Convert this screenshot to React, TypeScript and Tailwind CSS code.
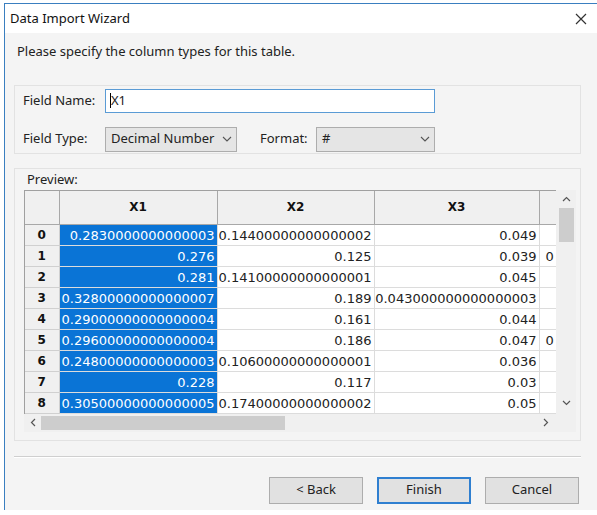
import React from 'react';

const rows = [
  ['0.2830000000000003', '0.14400000000000002', '0.049', ''],
  ['0.276', '0.125', '0.039', '0'],
  ['0.281', '0.14100000000000001', '0.045', ''],
  ['0.32800000000000007', '0.189', '0.043000000000000003', ''],
  ['0.29000000000000004', '0.161', '0.044', ''],
  ['0.29600000000000004', '0.186', '0.047', '0'],
  ['0.24800000000000003', '0.10600000000000001', '0.036', ''],
  ['0.228', '0.117', '0.03', ''],
  ['0.30500000000000005', '0.17400000000000002', '0.05', ''],
];

const ui = { fontFamily: '"Noto Sans", "Open Sans", sans-serif' };
const cell = { fontFamily: '"DejaVu Sans", sans-serif' };

function Chevron() {
  return (
    <svg width="10" height="6" viewBox="0 0 10 6" className="text-[#555]">
      <path d="M1 1l4 4 4-4" fill="none" stroke="currentColor" strokeWidth="1.1" />
    </svg>
  );
}

function Select({ value, width }: { value: string; width: string }) {
  return (
    <div className={`${width} h-[25px] flex items-center justify-between px-[4px] border border-[#adadad] bg-[#e5e5e5] text-[13px] text-[#222]`}>
      <span className="pl-[1px]">{value}</span>
      <Chevron />
    </div>
  );
}

function Btn({ label, primary }: { label: string; primary?: boolean }) {
  return (
    <div
      className={`w-[94px] h-[27px] flex items-center justify-center text-[13px] text-[#222] bg-[#e1e1e1] border ${primary ? 'border-[#2f7fd0] border-2' : 'border-[#adadad]'}`}
    >
      {label}
    </div>
  );
}

export default function App() {
  return (
    <div className="w-[597px] h-[515px] bg-white overflow-hidden" style={ui}>
      <div className="ml-[4px] mt-[3px] h-[507px] border-l border-t border-[#3a7fc0] bg-[#f4f4f4] flex flex-col">
        {/* title bar */}
        <div className="h-[29px] bg-white flex items-center justify-between pl-[5px] pr-[10px]">
          <span className="text-[13px] text-[#111]">Data Import Wizard</span>
          <svg width="12" height="12" viewBox="0 0 12 12">
            <path d="M1 1l10 10M11 1L1 11" stroke="#333" strokeWidth="1.2" />
          </svg>
        </div>

        <div className="pl-[12px] pt-[9px] text-[13px] text-[#222]">Please specify the column types for this table.</div>

        {/* field group */}
        <div className="mt-[23px] ml-[9px] w-[567px] h-[69px] border border-[#e2e2e2] pl-[8px] pt-[3px] flex flex-col gap-[14px] text-[13px] text-[#222]">
          <div className="flex items-center">
            <span className="w-[82px]">Field Name:</span>
            <div className="w-[330px] h-[24px] border border-[#5a9bd5] bg-white flex items-center pl-[4px]">
              <span className="w-[1px] h-[15px] bg-black" />
              <span>X1</span>
            </div>
          </div>
          <div className="flex items-center">
            <span className="w-[82px]">Field Type:</span>
            <Select value="Decimal Number" width="w-[132px]" />
            <span className="ml-[23px] w-[56px]">Format:</span>
            <Select value="#" width="w-[119px]" />
          </div>
        </div>

        {/* preview group */}
        <div className="mt-[14px] ml-[9px] w-[567px] h-[273px] border border-[#e2e2e2] pl-[9px] text-[13px] text-[#222]">
          <div className="pl-[3px] h-[21px] leading-[21px]">Preview:</div>
          <div className="flex">
            <div className="w-[532px] h-[224px] bg-white overflow-hidden border-t border-l border-[#a0a0a0]">
              <table className="w-[574px] border-collapse table-fixed text-[13px]" style={cell}>
                <colgroup>
                  <col className="w-[34px]" />
                  <col className="w-[158px]" />
                  <col className="w-[157px]" />
                  <col className="w-[165px]" />
                  <col className="w-[60px]" />
                </colgroup>
                <thead>
                  <tr className="h-[34px]">
                    <th className="border-r border-b border-[#a8a8a8] bg-[#f0f0f0]" />
                    {['X1', 'X2', 'X3', ''].map((h, i) => (
                      <th key={i} className="border-r border-b border-[#a8a8a8] bg-[#f0f0f0] font-bold text-[12px] text-[#111]">
                        {h}
                      </th>
                    ))}
                  </tr>
                </thead>
                <tbody>
                  {rows.map((r, i) => (
                    <tr key={i} className="h-[21px]">
                      <td className="border-r border-b border-[#d0d0d0] bg-[#f0f0f0] text-center font-bold text-[12px] text-[#111] leading-none">{i}</td>
                      {r.map((v, j) => (
                        <td
                          key={j}
                          className={`border-r border-b border-[#dcdcdc] leading-none whitespace-nowrap overflow-hidden ${
                            j === 0 ? 'bg-[#0a74d6] text-white text-right pr-[2px]' : j === 3 ? 'pl-[6px] text-[#222]' : 'text-right pr-[2px] text-[#222]'
                          }`}
                        >
                          {v}
                        </td>
                      ))}
                    </tr>
                  ))}
                </tbody>
              </table>
            </div>
            {/* vertical scrollbar */}
            <div className="w-[20px] h-[224px] bg-[#f0f0f0] flex flex-col items-center">
              <svg width="9" height="6" viewBox="0 0 9 6" className="mt-[6px]">
                <path d="M1 5l3.5-3.5L8 5" fill="none" stroke="#555" strokeWidth="1.2" />
              </svg>
              <div className="mt-[6px] w-[15px] h-[34px] bg-[#cdcdcd]" />
              <div className="flex-1" />
              <svg width="9" height="6" viewBox="0 0 9 6" className="mb-[8px]">
                <path d="M1 1l3.5 3.5L8 1" fill="none" stroke="#555" strokeWidth="1.2" />
              </svg>
            </div>
          </div>
          {/* horizontal scrollbar */}
          <div className="w-[552px] h-[18px] bg-[#f0f0f0] flex items-center">
            <svg width="6" height="9" viewBox="0 0 6 9" className="ml-[6px]">
              <path d="M5 1L1.5 4.5 5 8" fill="none" stroke="#555" strokeWidth="1.2" />
            </svg>
            <div className="ml-[5px] w-[244px] h-[14px] bg-[#cdcdcd]" />
            <div className="flex-1" />
            <svg width="6" height="9" viewBox="0 0 6 9" className="mr-[27px]">
              <path d="M1 1l3.5 3.5L1 8" fill="none" stroke="#555" strokeWidth="1.2" />
            </svg>
          </div>
        </div>

        {/* separator */}
        <div className="mt-[15px] ml-[9px] w-[567px] h-[2px] border-t border-[#cfcfcf] border-b border-b-white" />

        {/* buttons */}
        <div className="mt-[19px] flex justify-end gap-[14px] pr-[18px]">
          <Btn label="< Back" />
          <Btn label="Finish" primary />
          <Btn label="Cancel" />
        </div>
      </div>
    </div>
  );
}
